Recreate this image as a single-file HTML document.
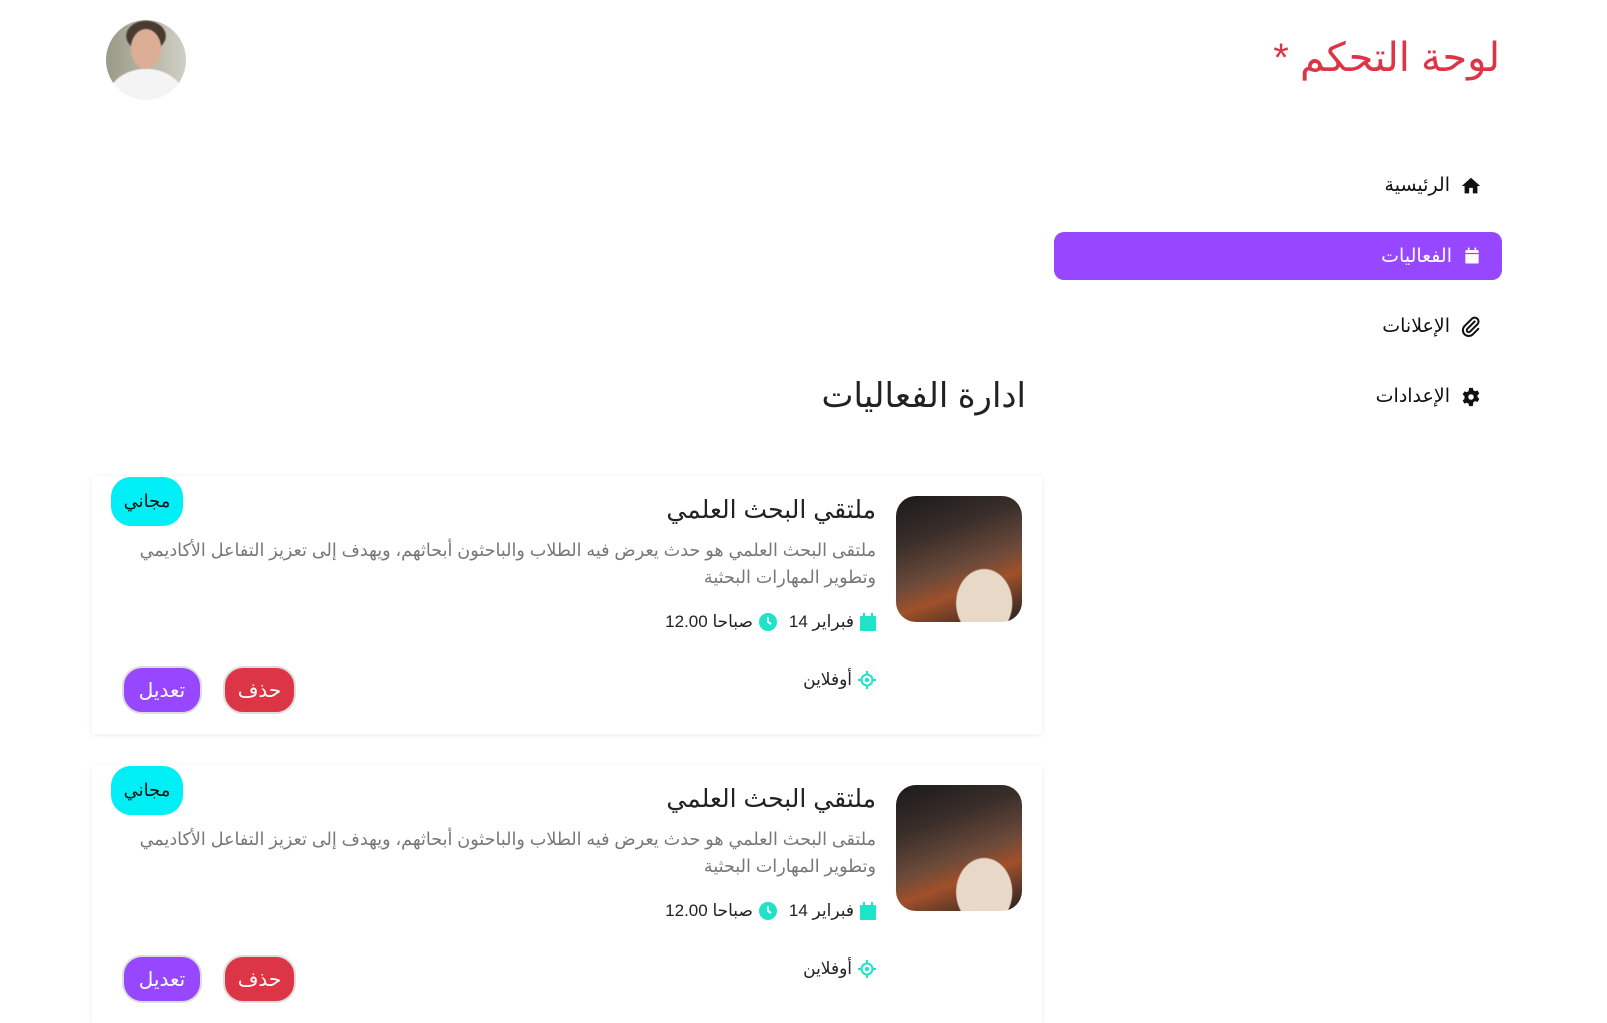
<!DOCTYPE html>
<html lang="ar" dir="rtl"><head><meta charset="utf-8">
<style>
*{margin:0;padding:0;box-sizing:border-box}
body{width:1607px;height:964px;overflow:hidden;background:#fff;font-family:"Liberation Sans","Noto Sans CJK SC","DejaVu Sans",sans-serif;position:relative;color:#222}
.a{position:absolute;white-space:nowrap}
.title{right:107px;top:30px;font-size:40px;color:#dc3545;line-height:56px}
.avatar{left:106px;top:20px;width:80px;height:80px;border-radius:50%;background:radial-gradient(ellipse 20% 26% at 50% 36%,#dcae96 0 90%,transparent 100%),radial-gradient(ellipse 26% 20% at 50% 20%,#4a3b30 0 90%,transparent 100%),radial-gradient(ellipse 50% 40% at 50% 100%,#f4f4f4 0 95%,transparent 100%),linear-gradient(90deg,#9a9a88,#cfcfc4);overflow:hidden}
.nav{font-size:19px;display:flex;align-items:center;gap:10px;color:#111}
.nav svg{width:22px;height:22px}
.active{left:1054px;top:232px;width:448px;height:48px;background:#9747ff;border-radius:10px;color:#fff;font-size:19px;display:flex;align-items:center;justify-content:flex-start;padding-right:20px;gap:10px}
.h2{right:581px;top:376px;font-size:34px;color:#222}
.card{left:92px;width:950px;height:258px;background:#fff;box-shadow:0 1px 6px rgba(0,0,0,.08)}
.img{right:20px;top:20px;width:126px;height:126px;border-radius:20px;background:radial-gradient(ellipse at 70% 85%,#e8d8c8 0 22%,transparent 23%),linear-gradient(160deg,#1a1a1a 0%,#3a2e2a 30%,#6b4a3a 55%,#a0502a 70%,#222 100%)}
.badge{left:19px;top:1px;width:72px;height:49px;border-radius:20px;background:#00eef6;font-size:18px;display:flex;align-items:center;justify-content:center;color:#111}
.ct{right:166px;top:19px;font-size:25px;color:#222}
.desc{right:166px;top:61px;width:780px;white-space:normal;font-size:17.6px;color:#777;line-height:27px;text-align:right}
.date{right:166px;top:136px;font-size:17px;display:flex;align-items:center;gap:6px;color:#222}
.loc{right:166px;top:194px;font-size:17px;display:flex;align-items:center;gap:6px;color:#222}
.btn{top:190px;height:48px;border-radius:20px;color:#fff;font-size:20px;display:flex;align-items:center;justify-content:center;border:2px solid #ddd}
.del{left:131px;width:73px;background:#dc3545}
.edit{left:30px;width:80px;background:#9747ff}
</style></head><body>
<div class="a title">لوحة التحكم *</div>
<div class="a avatar"></div>

<div class="a nav" style="right:125px;top:174px">
<svg viewBox="0 0 24 24"><path d="M12 3L2 12h3v8h5v-6h4v6h5v-8h3z" fill="#111"/></svg><span>الرئيسية</span></div>
<div class="a active"><svg viewBox="0 0 24 24" width="20" height="20"><path d="M5 5h14a1 1 0 0 1 1 1v14a1 1 0 0 1-1 1H5a1 1 0 0 1-1-1V6a1 1 0 0 1 1-1zM7 2h2v4H7zM15 2h2v4h-2z" fill="#fff"/><path d="M4 9h16" stroke="#9747ff" stroke-width="1.5"/></svg><span>الفعاليات</span></div>
<div class="a nav" style="right:125px;top:315px">
<svg viewBox="0 0 24 24"><path d="M16 6l-8 8a2 2 0 0 0 3 3l8-8a4 4 0 0 0-6-6l-8 8a6 6 0 0 0 9 9l6-6" fill="none" stroke="#111" stroke-width="2.2" stroke-linecap="round"/></svg><span>الإعلانات</span></div>
<div class="a nav" style="right:125px;top:385px">
<svg viewBox="0 0 24 24"><path d="M10 2h4l.6 2.6 2 1.1 2.5-.9 2 3.4-2 1.8v2.2l2 1.8-2 3.4-2.5-.9-2 1.1L14 22h-4l-.6-2.6-2-1.1-2.5.9-2-3.4 2-1.8V11l-2-1.8 2-3.4 2.5.9 2-1.1z" fill="#111"/><circle cx="12" cy="12" r="3" fill="#fff"/></svg><span>الإعدادات</span></div>

<div class="a h2">ادارة الفعاليات</div>

<div class="a card" style="top:476px">
 <div class="a img"></div>
 <div class="a badge">مجاني</div>
 <div class="a ct">ملتقي البحث العلمي</div>
 <div class="a desc">ملتقى البحث العلمي هو حدث يعرض فيه الطلاب والباحثون أبحاثهم، ويهدف إلى تعزيز التفاعل الأكاديمي وتطوير المهارات البحثية</div>
 <div class="a date"><svg width="16" height="18" viewBox="0 0 16 18"><rect x="0" y="3" width="16" height="15" rx="1" fill="#1ee3c8"/><rect x="3" y="0" width="2" height="4" fill="#1ee3c8"/><rect x="11" y="0" width="2" height="4" fill="#1ee3c8"/></svg><span>فبراير 14</span><svg width="18" height="18" viewBox="0 0 18 18" style="margin-right:6px"><circle cx="9" cy="9" r="9" fill="#1ee3c8"/><path d="M9 4v5l3 2" stroke="#fff" stroke-width="2" fill="none"/></svg><span>صباحا 12.00</span></div>
 <div class="a loc"><svg width="18" height="18" viewBox="0 0 18 18"><circle cx="9" cy="9" r="5.5" fill="none" stroke="#1ee3c8" stroke-width="2"/><circle cx="9" cy="9" r="2.2" fill="#1ee3c8"/><path d="M9 0v3M9 15v3M0 9h3M15 9h3" stroke="#1ee3c8" stroke-width="2"/></svg><span>أوفلاين</span></div>
 <div class="a btn del">حذف</div>
 <div class="a btn edit">تعديل</div>
</div>

<div class="a card" style="top:765px">
 <div class="a img"></div>
 <div class="a badge">مجاني</div>
 <div class="a ct">ملتقي البحث العلمي</div>
 <div class="a desc">ملتقى البحث العلمي هو حدث يعرض فيه الطلاب والباحثون أبحاثهم، ويهدف إلى تعزيز التفاعل الأكاديمي وتطوير المهارات البحثية</div>
 <div class="a date"><svg width="16" height="18" viewBox="0 0 16 18"><rect x="0" y="3" width="16" height="15" rx="1" fill="#1ee3c8"/><rect x="3" y="0" width="2" height="4" fill="#1ee3c8"/><rect x="11" y="0" width="2" height="4" fill="#1ee3c8"/></svg><span>فبراير 14</span><svg width="18" height="18" viewBox="0 0 18 18" style="margin-right:6px"><circle cx="9" cy="9" r="9" fill="#1ee3c8"/><path d="M9 4v5l3 2" stroke="#fff" stroke-width="2" fill="none"/></svg><span>صباحا 12.00</span></div>
 <div class="a loc"><svg width="18" height="18" viewBox="0 0 18 18"><circle cx="9" cy="9" r="5.5" fill="none" stroke="#1ee3c8" stroke-width="2"/><circle cx="9" cy="9" r="2.2" fill="#1ee3c8"/><path d="M9 0v3M9 15v3M0 9h3M15 9h3" stroke="#1ee3c8" stroke-width="2"/></svg><span>أوفلاين</span></div>
 <div class="a btn del">حذف</div>
 <div class="a btn edit">تعديل</div>
</div>
</body></html>
